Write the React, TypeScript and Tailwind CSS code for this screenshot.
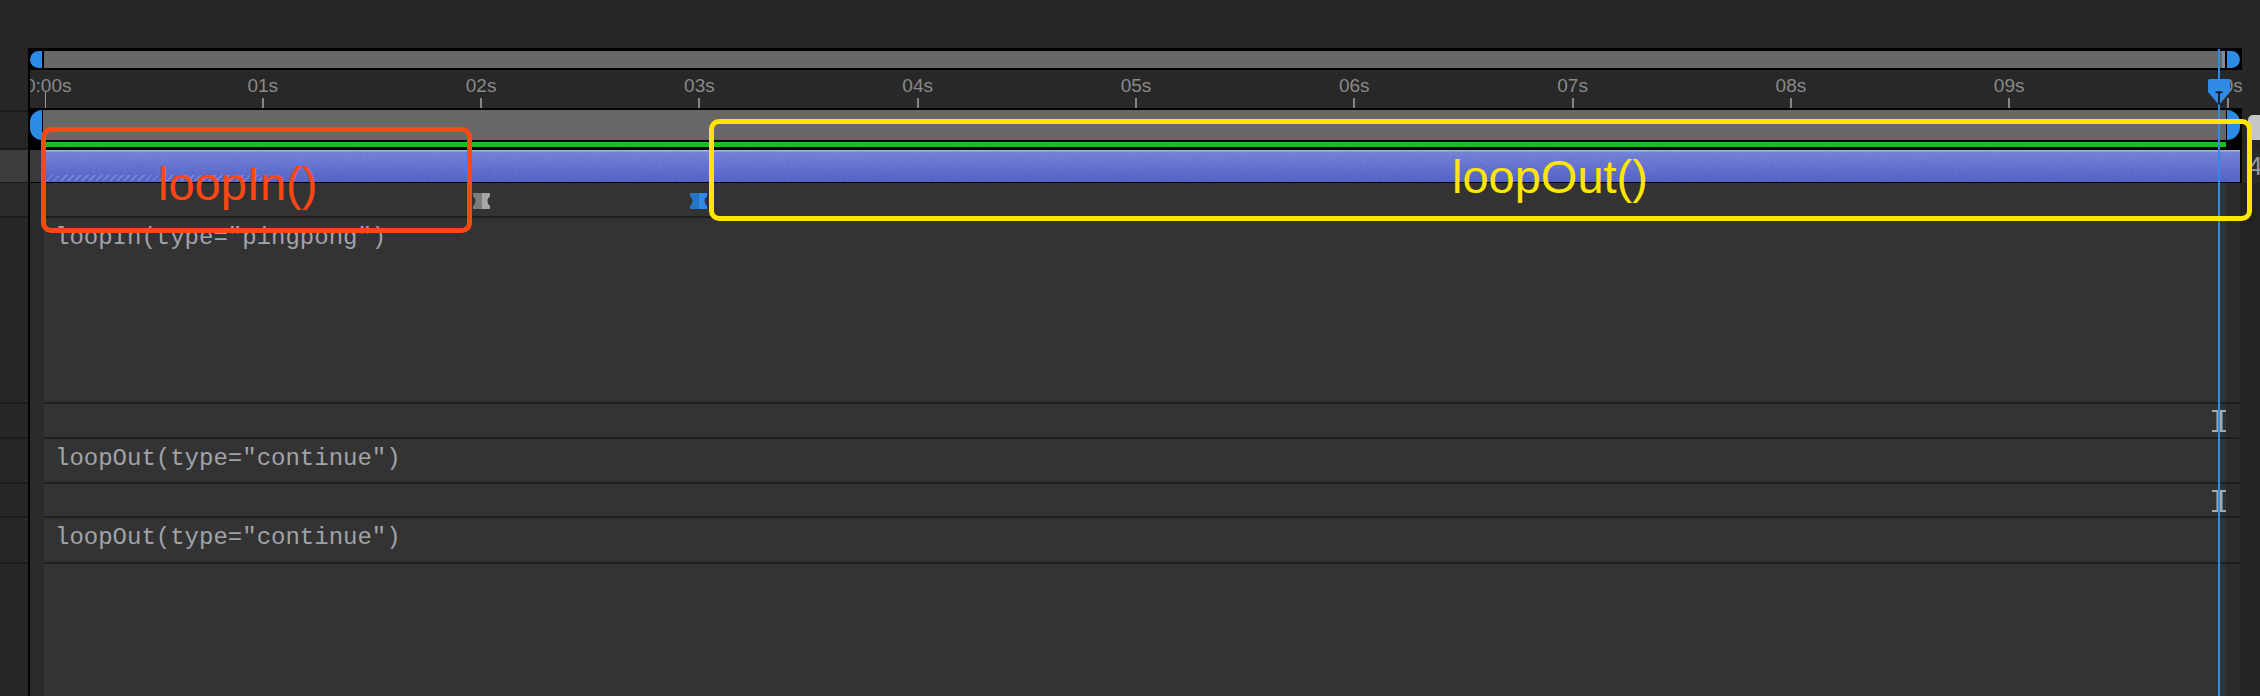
import React from "react";

const T0 = 44.5;
const PPS = 218.3;
const tx = (t: number) => T0 + t * PPS;

function label(t: number) {
  if (t === 0) return "0:00s";
  if (t < 10) return `0${t}s`;
  return "10s";
}

function Hourglass({ color, dark }: { color: string; dark: string }) {
  return (
    <svg width="17" height="16" viewBox="0 0 17 16" className="block">
      <path d="M0 0 H8.5 V16 H0 V13 Q5 8 0 3 Z" fill={dark} />
      <path d="M8.5 0 H17 V3 Q12 8 17 13 V16 H8.5 Z" fill={color} />
    </svg>
  );
}

function IBeam() {
  return (
    <svg width="14" height="22" viewBox="0 0 14 22" className="block">
      <rect x="0" y="0" width="14" height="2" fill="#a9a9a9" />
      <rect x="0" y="20" width="14" height="2" fill="#a9a9a9" />
      <rect x="4.5" y="0" width="6" height="22" fill="#a9a9a9" />
    </svg>
  );
}

function Sep() {
  return (
    <div className="flex h-[2px] shrink-0">
      <div className="w-[28px] shrink-0 bg-[#1c1c1c]" />
      <div className="w-[2px] shrink-0 bg-black" />
      <div className="w-[14px] shrink-0 bg-[#2a2a2a]" />
      <div className="w-[2196px] shrink-0 bg-[#1e1e1e]" />
      <div className="flex-1 bg-[#232323]" />
    </div>
  );
}

function LowerRow({
  h,
  children,
  leftBg = "bg-[#262626]",
  contentClass = "",
}: {
  h: string;
  children?: React.ReactNode;
  leftBg?: string;
  contentClass?: string;
}) {
  return (
    <div className={`flex shrink-0 ${h}`}>
      <div className={`w-[28px] shrink-0 ${leftBg}`} />
      <div className="w-[2px] shrink-0 bg-black" />
      <div className="w-[14px] shrink-0 bg-[#2a2a2a]" />
      <div className={`w-[2182px] shrink-0 bg-[#333333] ${contentClass}`}>{children}</div>
      <div className="w-[14px] shrink-0 bg-[#2b2b2b]" />
      <div className="flex-1 bg-[#232323]" />
    </div>
  );
}

export default function App() {
  const ticks = Array.from({ length: 11 }, (_, i) => i);
  const mono =
    "font-['Liberation_Mono','DejaVu_Sans_Mono',monospace] text-[24px] leading-[24px] text-[#a0a3a8] whitespace-pre";
  return (
    <div className="relative w-[2260px] h-[696px] overflow-hidden bg-[#262626] flex flex-col font-['Liberation_Sans',Arial,sans-serif]">
      {/* top empty area */}
      <div className="h-[48px] shrink-0" />

      {/* navigator scrollbar */}
      <div className="flex h-[22px] shrink-0">
        <div className="w-[28px] shrink-0" />
        <div className="w-[2214px] shrink-0 bg-black flex pt-[3px] pb-[2px] px-[2px]">
          <div className="w-[12px] shrink-0 rounded-l-full bg-[#2d8ae5]" />
          <div className="w-[2px] shrink-0" />
          <div className="flex-1 bg-[#686868] flex justify-end">
            <div className="w-[3px] bg-[#8a8a8a]" />
          </div>
          <div className="w-[2px] shrink-0" />
          <div className="w-[13px] shrink-0 rounded-r-full bg-[#2d8ae5]" />
        </div>
        <div className="flex-1" />
      </div>

      {/* ruler */}
      <div className="flex h-[38px] shrink-0">
        <div className="w-[28px] shrink-0" />
        <div className="w-[2px] shrink-0 bg-black" />
        <div className="relative w-[2212px] shrink-0 overflow-hidden bg-[#282828] text-[19px] leading-[19px] text-[#8a8a8a]">
          {ticks.map((t) => (
            <React.Fragment key={t}>
              <span
                className={`absolute top-[6px] whitespace-nowrap ${t === 0 ? "" : "-translate-x-1/2"}`}
                style={{ left: t === 0 ? -5 : tx(t) - 30 }}
              >
                {label(t)}
              </span>
              {t === 0 ? (
                <span className="absolute bottom-0 w-[1px] h-[16px] bg-[#9a9a9a]" style={{ left: tx(0) - 30 }} />
              ) : (
                <span className="absolute bottom-0 w-[2px] h-[10px] bg-[#858585]" style={{ left: tx(t) - 31 }} />
              )}
            </React.Fragment>
          ))}
        </div>
        <div className="flex-1" />
      </div>

      {/* black separator */}
      <div className="flex h-[2px] shrink-0">
        <div className="w-[28px] shrink-0" />
        <div className="w-[2214px] shrink-0 bg-black" />
        <div className="flex-1" />
      </div>

      {/* work area bar */}
      <div className="flex h-[30px] shrink-0">
        <div className="w-[28px] shrink-0 border-t-2 border-[#1b1b1b]" />
        <div className="w-[2214px] shrink-0 bg-black flex px-[2px]">
          <div className="w-[12px] shrink-0 rounded-l-full bg-[#2d8ae5]" />
          <div className="w-[1px] shrink-0" />
          <div className="flex-1 bg-[#676767]" />
          <div className="w-[1px] shrink-0" />
          <div className="w-[13px] shrink-0 rounded-r-full bg-[#2d8ae5]" />
        </div>
        <div className="flex-1 pl-[6px] pt-[5px]">
          <div className="h-full rounded-tl-[5px] bg-[#c6c6c6]" />
        </div>
      </div>

      {/* green line */}
      <div className="flex h-[10px] shrink-0">
        <div className="w-[28px] shrink-0 border-b-2 border-[#1b1b1b]" />
        <div className="w-[2214px] shrink-0 bg-black pl-[16px] pt-[2px]">
          <div className="w-[2182px] h-[5px] bg-[#14c21c]" />
        </div>
        <div className="flex-1" />
      </div>

      {/* layer bar */}
      <div className="flex h-[32px] shrink-0">
        <div className="w-[28px] shrink-0 bg-[#3c3c3c]" />
        <div className="w-[2px] shrink-0 bg-black" />
        <div className="w-[14px] shrink-0 bg-[#3a3a3a]" />
        <div className="relative w-[2196px] shrink-0 overflow-hidden flex flex-col justify-end bg-[linear-gradient(180deg,#a8b1ea_0px,#a8b1ea_1px,#6b7bd9_2px,#5868d0_55%,#4659c7_100%)]">
          <svg className="absolute inset-0 w-full h-full opacity-[0.22]" preserveAspectRatio="none">
            <filter id="noise">
              <feTurbulence type="fractalNoise" baseFrequency="1.1" numOctaves="2" stitchTiles="stitch" />
              <feColorMatrix type="saturate" values="0" />
            </filter>
            <rect width="100%" height="100%" filter="url(#noise)" />
          </svg>
          <div className="relative w-[218px] h-[6px] mb-[1px] bg-[repeating-linear-gradient(135deg,rgba(190,198,232,0.28)_0px,rgba(190,198,232,0.28)_2px,transparent_2px,transparent_5px)]" />
        </div>
        <div className="w-[2px] shrink-0 bg-black" />
        <div className="flex-1 overflow-hidden bg-[#2a2a2a] pl-[6px] text-[26px] leading-[32px] text-[#9a9a9a]">4</div>
      </div>

      {/* black line */}
      <div className="flex h-[1px] shrink-0">
        <div className="w-[28px] shrink-0 bg-[#1b1b1b]" />
        <div className="w-[2214px] shrink-0 bg-black" />
        <div className="flex-1 bg-[#2a2a2a]" />
      </div>

      {/* keyframe row */}
      <LowerRow h="h-[33px]" leftBg="bg-[#2a2a2a]" contentClass="flex items-start pt-[10px] pl-[429px]">
        <Hourglass color="#a6a6a6" dark="#7c7c7c" />
        <div className="w-[200px] shrink-0" />
        <Hourglass color="#2d8ae5" dark="#2476c8" />
      </LowerRow>
      <Sep />

      {/* expression loopIn */}
      <LowerRow h="h-[184px]" contentClass="pl-[11px] pt-[8px]">
        <div className={mono}>loopIn(type="pingpong")</div>
      </LowerRow>
      <Sep />

      <LowerRow h="h-[33px]" contentClass="flex justify-end pt-[6px]">
        <IBeam />
      </LowerRow>
      <Sep />

      <LowerRow h="h-[43px]" contentClass="pl-[11px] pt-[8px]">
        <div className={mono}>loopOut(type="continue")</div>
      </LowerRow>
      <Sep />

      <LowerRow h="h-[32px]" contentClass="flex justify-end pt-[6px]">
        <IBeam />
      </LowerRow>
      <Sep />

      <LowerRow h="h-[44px]" contentClass="pl-[11px] pt-[8px]">
        <div className={mono}>loopOut(type="continue")</div>
      </LowerRow>
      <Sep />

      <div className="flex flex-1">
        <div className="w-[28px] shrink-0 bg-[#262626]" />
        <div className="w-[2px] shrink-0 bg-black" />
        <div className="w-[14px] shrink-0 bg-[#2a2a2a]" />
        <div className="w-[2182px] shrink-0 bg-[#333333]" />
        <div className="w-[14px] shrink-0 bg-[#2b2b2b]" />
        <div className="flex-1 bg-[#232323]" />
      </div>

      {/* playhead */}
      <div className="absolute left-[2218px] top-[49px] bottom-0 w-[2px] bg-[#2f8be6]" />
      <svg className="absolute left-[2208px] top-[79px]" width="22" height="26" viewBox="0 0 22 26">
        <path d="M1.5 0 H20.5 Q22 0 22 1.5 V13 L11 26 L0 13 V1.5 Q0 0 1.5 0 Z" fill="#2f8be6" />
        <rect x="7.5" y="12.5" width="7" height="1.6" fill="#111" />
        <rect x="10.2" y="12.5" width="1.6" height="13" fill="#111" />
      </svg>

      {/* annotations */}
      <div className="absolute left-[41px] top-[127px] w-[431px] h-[106px] rounded-[10px] border-[5px] border-[#ff4714]" />
      <div className="absolute left-[158px] top-[160px] text-[47px] leading-[47px] text-[#ff4714] whitespace-nowrap">loopIn()</div>

      <div className="absolute left-[709px] top-[119px] w-[1543px] h-[102px] rounded-[10px] border-[5px] border-[#ffe600]" />
      <div className="absolute left-[1452px] top-[153px] text-[47px] leading-[47px] text-[#ffe600] whitespace-nowrap">loopOut()</div>
    </div>
  );
}
